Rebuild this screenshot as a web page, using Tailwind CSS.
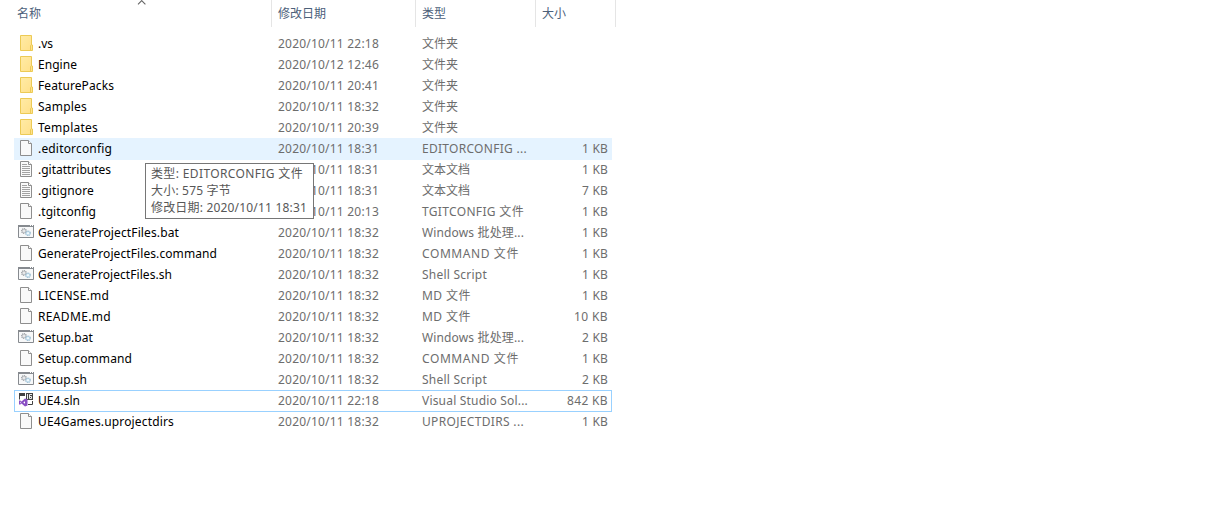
<!DOCTYPE html>
<html lang="zh-CN">
<head>
<meta charset="utf-8">
<title>File list</title>
<script src="https://cdn.jsdelivr.net/npm/@tailwindcss/browser@4"></script>
</head>
<body class="bg-white w-[1206px] h-[514px] overflow-hidden relative text-[12px] leading-[21px] text-[#6d6d6d] font-['Noto_Sans','Noto_Sans_CJK_SC',sans-serif]">
<svg class="absolute" width="0" height="0">
  <defs>
    <linearGradient id="fg" x1="0" y1="0" x2="1" y2="1"><stop offset="0" stop-color="#ffeba6"/><stop offset="1" stop-color="#ffe089"/></linearGradient>
    <symbol id="folder" viewBox="0 0 16 16">
      <path d="M2.5.5h11v9.500h1v5.500h-12z" fill="url(#fg)" stroke="#ecca55"/>
      <path d="M12.5 15V10.500l1-1" fill="none" stroke="#ecca55"/>
    </symbol>
    <symbol id="file" viewBox="0 0 16 16">
      <path d="M2.500.5h8l3 3v12h-11z" fill="#f9f9f9" stroke="#8e8e8e"/>
      <path d="M10.500.5v3h3" fill="#fff" stroke="#8e8e8e"/>
    </symbol>
    <symbol id="text" viewBox="0 0 16 16">
      <path d="M2.500.5h8l3 3v12h-11z" fill="#fafafa" stroke="#8e8e8e"/>
      <path d="M10.500.5v3h3" fill="#fff" stroke="#8e8e8e"/>
      <path d="M4 3.500h5M4 5.500h8M4 7.500h8M4 9.500h8M4 11.500h8M4 13.500h8" stroke="#a3a3a3"/>
    </symbol>
    <symbol id="bat" viewBox="0 0 16 16">
      <path d="M.5 1.500h15v12H.5z" fill="#f7f8f9" stroke="#868a8f"/>
      <path d="M0 2h16" stroke="#868a8f" stroke-width="2"/>
      <path d="M12 1.500h1M14 1.500h1" stroke="#fff"/>
      <circle cx="6" cy="7" r="2.300" fill="#d5d7d9" stroke="#9a9ea3" stroke-width="1.200" stroke-dasharray="1 .6"/>
      <circle cx="6" cy="7" r=".8" fill="#fff"/>
      <circle cx="10" cy="9.200" r="2.200" fill="#d9edf8" stroke="#8fb5cd" stroke-width="1.200" stroke-dasharray="1 .6"/>
      <circle cx="10" cy="9.200" r=".8" fill="#fff"/>
    </symbol>
    <symbol id="sln" viewBox="0 0 16 16">
      <path d="M1 1h6v3H1z" fill="#424242"/>
      <path d="M1.500 4v3.500M14.500 9v3.500H10" fill="none" stroke="#424242"/>
      <path d="M8 1h7v7H8z" fill="#424242"/>
      <path d="M9.500 2v5M14 2.500h-2.500v4h2v-2h-2" fill="none" stroke="#fff" stroke-width=".9"/>
      <path d="M7 6.500l2.500 1v6l-2.500 1L3.500 11.500 2 12.800l-1-.5V8.700l1-.5 1.500 1.300zM7 9.200l-1.700 1.300L7 11.800zM2 9.600v1.800l.8-.9z" fill="#8a4fc4" fill-rule="evenodd"/>
    </symbol>
  </defs>
</svg>

<header class="relative flex h-[27px] w-[616px] text-[#4c607a] leading-[27px]">
  <div class="w-[272px] pl-[17px] border-r border-[#e5e5e5]">名称</div>
  <div class="w-36 pl-1.5 border-r border-[#e5e5e5]">修改日期</div>
  <div class="w-[120px] pl-1.5 border-r border-[#e5e5e5]">类型</div>
  <div class="w-20 pl-1.5 border-r border-[#e5e5e5]">大小</div>
  <svg class="absolute left-[137px] top-0" width="10" height="5" fill="none" stroke="#666" stroke-width="1.100"><path d="M1 4.300L4.700.6l3.700 3.700"/></svg>
</header>

<main id="list" class="mt-1.5 ml-3.5 w-[598px]"></main>

<div class="absolute left-[145px] top-[163px] w-[169px] h-[56px] border border-[#767676] bg-white pl-[5px] pt-px leading-[17px] text-[#575757] whitespace-nowrap">
  <div><span data-w="152">类型: EDITORCONFIG 文件</span></div>
  <div><span data-w="80">大小: 575 字节</span></div>
  <div><span data-w="156">修改日期: 2020/10/11 18:31</span></div>
</div>

<script>
const rows = [
  ['folder', '.vs', 15, '11 22:18', '文件夹', 36],
  ['folder', 'Engine', 39, '12 12:46', '文件夹', 36],
  ['folder', 'FeaturePacks', 76, '11 20:41', '文件夹', 36],
  ['folder', 'Samples', 49, '11 18:32', '文件夹', 36],
  ['folder', 'Templates', 60, '11 20:39', '文件夹', 36],
  ['file', '.editorconfig', 74, '11 18:31', 'EDITORCONFIG ...', 105, '1 KB', 26],
  ['text', '.gitattributes', 73, '11 18:31', '文本文档', 48, '1 KB', 26],
  ['text', '.gitignore', 56, '11 18:31', '文本文档', 48, '7 KB', 26],
  ['file', '.tgitconfig', 58, '11 20:13', 'TGITCONFIG 文件', 102, '1 KB', 26],
  ['bat', 'GenerateProjectFiles.bat', 141, '11 18:32', 'Windows 批处理...', 102, '1 KB', 26],
  ['file', 'GenerateProjectFiles.command', 179, '11 18:32', 'COMMAND 文件', 97, '1 KB', 26],
  ['bat', 'GenerateProjectFiles.sh', 134, '11 18:32', 'Shell Script', 65, '1 KB', 26],
  ['file', 'LICENSE.md', 71, '11 18:32', 'MD 文件', 49, '1 KB', 26],
  ['file', 'README.md', 73, '11 18:32', 'MD 文件', 49, '10 KB', 34],
  ['bat', 'Setup.bat', 55, '11 18:32', 'Windows 批处理...', 102, '2 KB', 26],
  ['file', 'Setup.command', 94, '11 18:32', 'COMMAND 文件', 97, '1 KB', 26],
  ['bat', 'Setup.sh', 49, '11 18:32', 'Shell Script', 65, '2 KB', 26],
  ['sln', 'UE4.sln', 42, '11 22:18', 'Visual Studio Sol...', 106, '842 KB', 41],
  ['file', 'UE4Games.uprojectdirs', 136, '11 18:32', 'UPROJECTDIRS ...', 102, '1 KB', 26],
];
document.getElementById('list').innerHTML = rows.map(([icon, name, nw, date, type, tw, size = '', sw = 0], i) => `
  <div class="flex h-[22px] -mb-px whitespace-nowrap ${i === 5 ? 'bg-[#e5f3ff]' : i === 17 ? 'outline outline-1 -outline-offset-1 outline-[#99d1ff]' : ''}">
    <svg class="ml-1 mt-0.5 mr-1 w-4 h-4 shrink-0"><use href="#${icon}"/></svg>
    <div class="w-60 text-black"><span data-w="${nw}">${name}</span></div>
    <div class="w-36"><span data-w="101">2020/10/${date}</span></div>
    <div class="w-[120px]"><span data-w="${tw}">${type}</span></div>
    <div class="w-[66px] text-right"><span data-w="${sw}">${size}</span></div>
  </div>`).join('');
// Track each label so that it fills its intended width.
const ctx = document.createElement('canvas').getContext('2d');
ctx.font = '12px "Noto Sans", "Noto Sans CJK SC", sans-serif';
document.querySelectorAll('[data-w]').forEach(s => {
  const t = s.textContent;
  if (t) s.style.letterSpacing = (s.dataset.w - ctx.measureText(t).width) / t.length + 'px';
});
</script>
</body>
</html>
